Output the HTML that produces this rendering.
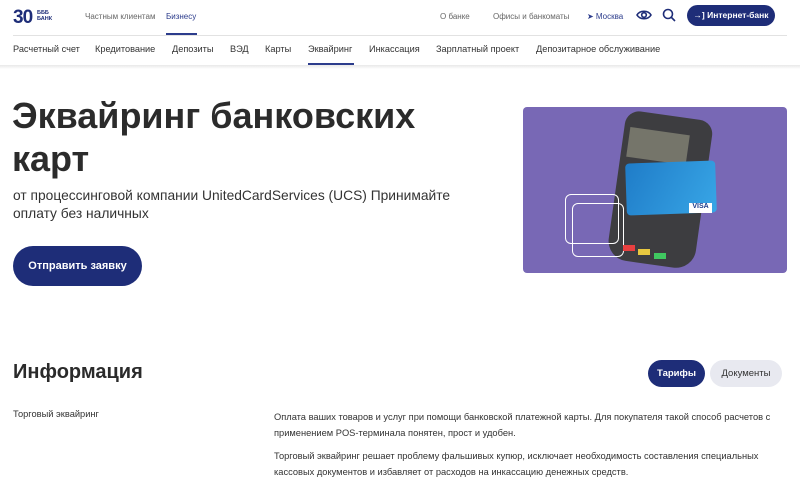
<!DOCTYPE html>
<html><head><meta charset="utf-8"><style>
*{margin:0;padding:0;box-sizing:border-box}
body{width:800px;height:486px;overflow:hidden;background:#fff;font-family:"Liberation Sans",sans-serif;color:#2b2b2b;position:relative}
.a{position:absolute;white-space:nowrap}
.top{font-size:8px;color:#666}
.nav{font-size:9.2px;color:#333;top:44px}
</style></head><body>
<div class="a" style="left:13px;top:7px;font-size:19px;font-weight:bold;color:#1e2d78;letter-spacing:-1px">30</div>
<div class="a" style="left:37px;top:10px;font-size:5.5px;font-weight:bold;color:#1e2d78;line-height:6px">БББ<br>БАНК</div>
<div class="a top" style="left:85px;top:12px">Частным клиентам</div>
<div class="a top" style="left:166px;top:12px;color:#2c3c8c">Бизнесу</div>
<div class="a" style="left:166px;top:33px;width:31px;height:2px;background:#2c3c8c"></div>
<div class="a top" style="left:440px;top:12px">О банке</div>
<div class="a top" style="left:493px;top:12px">Офисы и банкоматы</div>
<div class="a top" style="left:587px;top:12px;color:#2c3c8c">➤ Москва</div>
<svg class="a" style="left:636px;top:8px" width="16" height="14" viewBox="0 0 16 14"><path d="M1 7C4 2 12 2 15 7C12 12 4 12 1 7Z" fill="none" stroke="#1e2d78" stroke-width="1.6"/><circle cx="8" cy="7" r="2.3" fill="none" stroke="#1e2d78" stroke-width="1.6"/></svg>
<svg class="a" style="left:662px;top:8px" width="14" height="14" viewBox="0 0 14 14"><circle cx="6" cy="6" r="4.5" fill="none" stroke="#1e2d78" stroke-width="1.6"/><path d="M9.5 9.5L13 13" stroke="#1e2d78" stroke-width="1.6"/></svg>
<div class="a" style="left:687px;top:5px;width:88px;height:21px;border-radius:11px;background:#1e2d78;color:#fff;font-size:8.5px;font-weight:bold;line-height:21px;text-align:center">→] Интернет-банк</div>
<div class="a" style="left:13px;top:35px;width:774px;height:1px;background:#e2e2e2"></div>
<div class="a nav" style="left:13px">Расчетный счет</div>
<div class="a nav" style="left:95px">Кредитование</div>
<div class="a nav" style="left:172px">Депозиты</div>
<div class="a nav" style="left:230px">ВЭД</div>
<div class="a nav" style="left:265px">Карты</div>
<div class="a nav" style="left:308px">Эквайринг</div>
<div class="a" style="left:308px;top:63px;width:46px;height:2px;background:#2c3c8c"></div>
<div class="a nav" style="left:369px">Инкассация</div>
<div class="a nav" style="left:436px">Зарплатный проект</div>
<div class="a nav" style="left:536px">Депозитарное обслуживание</div>
<div class="a" style="left:0;top:65px;width:800px;height:4px;background:linear-gradient(#e8e8e8,#fff)"></div>
<div class="a" style="left:12px;top:94px;font-size:36px;font-weight:bold;line-height:43px;color:#2b2b2b">Эквайринг банковских<br>карт</div>
<div class="a" style="left:13px;top:187px;font-size:13.8px;line-height:18px;color:#333">от процессинговой компании UnitedCardServices (UCS) Принимайте<br>оплату без наличных</div>
<div class="a" style="left:13px;top:246px;width:129px;height:40px;border-radius:20px;background:#1e2d78;color:#fff;font-size:11px;font-weight:bold;line-height:40px;text-align:center">Отправить заявку</div>
<div class="a" style="left:523px;top:107px;width:264px;height:166px;border-radius:4px;background:#7868b5;overflow:hidden">
<div class="a" style="left:93px;top:8px;width:88px;height:150px;border-radius:14px 14px 20px 20px;background:#3d3d40;transform:rotate(8deg)"></div>
<div class="a" style="left:105px;top:24px;width:60px;height:30px;background:#75756a;transform:rotate(8deg)"></div>
<div class="a" style="left:103px;top:55px;width:90px;height:52px;border-radius:4px;background:linear-gradient(120deg,#1f7cc8,#38a6e6);transform:rotate(-2deg)"></div>
<div class="a" style="left:166px;top:96px;width:23px;height:10px;background:#fff;color:#1a3a8a;font-size:7px;font-weight:bold;text-align:center">VISA</div>
<div class="a" style="left:42px;top:87px;width:54px;height:50px;border:1.5px solid #fff;border-radius:6px"></div>
<div class="a" style="left:49px;top:96px;width:52px;height:54px;border:1.5px solid #fff;border-radius:6px"></div>
<div class="a" style="left:100px;top:138px;width:12px;height:6px;background:#e84040"></div>
<div class="a" style="left:115px;top:142px;width:12px;height:6px;background:#e8c840"></div>
<div class="a" style="left:131px;top:146px;width:12px;height:6px;background:#40c860"></div>
</div>
<div class="a" style="left:13px;top:361px;font-size:20px;font-weight:bold;color:#2b2b2b">Информация</div>
<div class="a" style="left:648px;top:360px;width:57px;height:27px;border-radius:14px;background:#1e2d78;color:#fff;font-size:9.5px;font-weight:bold;line-height:27px;text-align:center">Тарифы</div>
<div class="a" style="left:710px;top:360px;width:72px;height:27px;border-radius:14px;background:#e8e9f0;color:#333;font-size:9.5px;line-height:27px;text-align:center">Документы</div>
<div class="a" style="left:13px;top:409px;font-size:9.3px;color:#333">Торговый эквайринг</div>
<div class="a" style="left:274px;top:409px;font-size:9.3px;line-height:16px;color:#333">Оплата ваших товаров и услуг при помощи банковской платежной карты. Для покупателя такой способ расчетов с<br>применением POS-терминала понятен, прост и удобен.</div>
<div class="a" style="left:274px;top:448px;font-size:9.3px;line-height:16px;color:#333">Торговый эквайринг решает проблему фальшивых купюр, исключает необходимость составления специальных<br>кассовых документов и избавляет от расходов на инкассацию денежных средств.</div>
</body></html>
